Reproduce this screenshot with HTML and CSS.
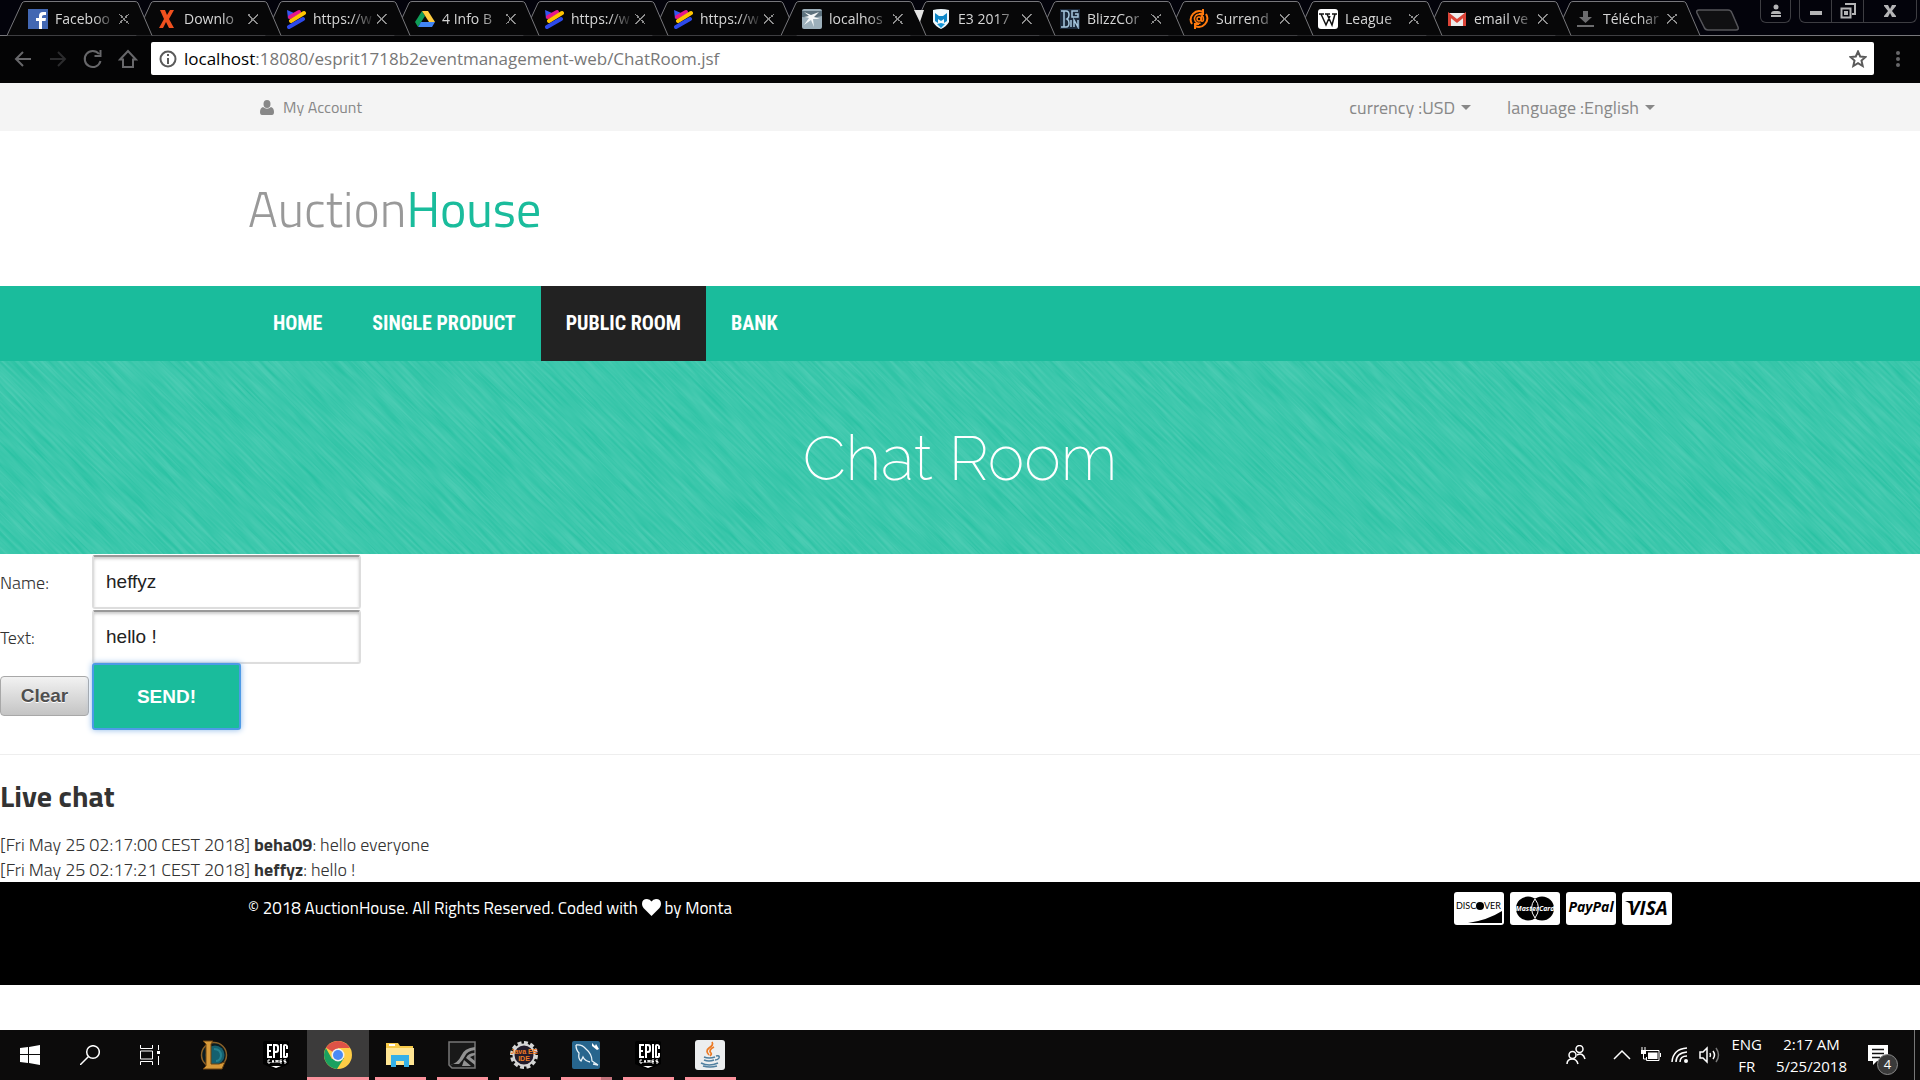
FILE: index.html
```html
<!DOCTYPE html>
<html lang="en">
<head>
<meta charset="utf-8">
<title>Chat Room</title>
<link rel="stylesheet" href="styles.css">
</head>
<body>
<svg class="defs" aria-hidden="true">
  <symbol id="shape" viewBox="0 0 146 36"><path d="M0 35.500L15 3Q16 1.500 18 1.500H128Q130 1.500 131 3L145 35.500" fill="#070708" stroke="#77777b"/></symbol>
  <symbol id="slash" viewBox="0 0 20 20"><path d="M1 1l7 3-6 6z" fill="#3558f0"/><path d="M4 8L13 3" stroke="#e6178a" stroke-width="4" stroke-linecap="round"/><path d="M5 12L18 4" stroke="#ffc400" stroke-width="4" stroke-linecap="round"/><path d="M3 18L17 10" stroke="#2c49ea" stroke-width="4" stroke-linecap="round"/></symbol>
  <symbol id="epic" viewBox="0 0 28 30"><path d="M1 3q0-2 2-2h22q2 0 2 2v21l-13 6L1 24z" fill="#000"/><path d="M5 4h5v2H7v4h2v2H7v4h3v2H5zM11 4h3q3 0 3 3v3q0 3-3 3h-1v5h-2zm2 2v5q2 0 2-1V7q0-1-2-1zM18 4h2v14h-2zM21 6q0-2 2-2t3 2v3h-2V6h-1v10h1v-3h2v3q0 2-3 2t-2-2z" fill="#fff"/><path d="M8 20H6v3h2v-1M10 23l1-3 1 3M14 23v-3l1 2 1-2v3M20 20h-2v3h2m-2-1.500h2M24 20h-2v1.500h2V23h-2" stroke="#fff" fill="none"/><path d="M9 26h10l-5 2z" fill="#fff"/></symbol>
</svg>

<header class="browser">
  <div class="strip">
    <nav class="tabs" aria-label="Tabs">
      <div class="tab"><svg class="shape"><use href="#shape"/></svg><svg class="fav" viewBox="0 0 20 20"><path d="M0 0h20v20H0z" fill="#4267b2"/><path d="M11 20v-8H8V9h3V7q0-4 4-4h3v3h-2q-2 0-2 1.500V9h4l-.5 3H14v8z" fill="#fff"/></svg><span class="name">Faceboo</span><button class="close" aria-label="Close tab"></button></div>
      <div class="tab"><svg class="shape"><use href="#shape"/></svg><svg class="fav" viewBox="0 0 20 20"><path d="M3 1h5l2 5 3-5h4l-5 9 5 9h-5l-3-6-3 6H2l5-9z" fill="#f0501e"/></svg><span class="name">Downlo</span><button class="close" aria-label="Close tab"></button></div>
      <div class="tab"><svg class="shape"><use href="#shape"/></svg><svg class="fav"><use href="#slash"/></svg><span class="name">https://w</span><button class="close" aria-label="Close tab"></button></div>
      <div class="tab"><svg class="shape"><use href="#shape"/></svg><svg class="fav" viewBox="0 0 20 20"><path d="M7 2L0 13l3 5L10 7z" fill="#0f9d58"/><path d="M7 2h6l7 11h-6z" fill="#ffcd40"/><path d="M6 13h14l-3 5H3z" fill="#4285f4"/></svg><span class="name">4 Info B</span><button class="close" aria-label="Close tab"></button></div>
      <div class="tab"><svg class="shape"><use href="#shape"/></svg><svg class="fav"><use href="#slash"/></svg><span class="name">https://w</span><button class="close" aria-label="Close tab"></button></div>
      <div class="tab"><svg class="shape"><use href="#shape"/></svg><svg class="fav"><use href="#slash"/></svg><span class="name">https://w</span><button class="close" aria-label="Close tab"></button></div>
      <div class="tab active"><svg class="shape"><use href="#shape"/></svg><svg class="fav" viewBox="0 0 20 20"><rect width="20" height="20" rx="2" fill="#9db0bb"/><path d="M0 2h20v5L10 9 0 8z" fill="#5c717d"/><path d="M2 3l7 3 8-3-5 5 6 2-7 0 1 8-3-7-7 5 5-7-5-1 5-1z" fill="#f4f7f8"/></svg><span class="name">localhos</span><button class="close" aria-label="Close tab"></button></div>
      <div class="tab"><svg class="shape"><use href="#shape"/></svg><svg class="fav" viewBox="0 0 20 20"><path d="M2 1q8-2 16 0v12q-3 5-8 7-5-2-8-7z" fill="#eef8fc"/><path d="M4 4l4 3h4l4-3v8l-3 2v-4l-3 2-3-2v4l-3-2z" fill="#0b86c8"/><path d="M6 15l4 4 4-4-4-1z" fill="#1696d8"/></svg><span class="name">E3 2017</span><button class="close" aria-label="Close tab"></button></div>
      <div class="tab"><svg class="shape"><use href="#shape"/></svg><svg class="fav" viewBox="0 0 20 20"><rect width="20" height="20" fill="#1c2a3c"/><path d="M1 2h5q3 0 3 4 0 3-2 4 2 1 2 4 0 4-3 4H1M4 2v16M18 2h-6v6h6V5h-3M11 11v7m3 0v-7l4 7v-7" fill="none" stroke="#a6c7df" stroke-width="1.500"/></svg><span class="name">BlizzCor</span><button class="close" aria-label="Close tab"></button></div>
      <div class="tab"><svg class="shape"><use href="#shape"/></svg><svg class="fav" viewBox="0 0 20 20"><path d="M3 15a8.500 8.500 0 0 1 11-12M17 5a8.500 8.500 0 0 1-11 12M14 0v5h-4M6 20v-5h4" fill="none" stroke="#ff7a0e" stroke-width="2"/><path d="M12.500 7v5q2 1 2-2a4.500 4.500 0 1 0-3 4" fill="none" stroke="#ff7a0e" stroke-width="1.500"/><circle cx="10" cy="10" r="2" fill="none" stroke="#ff7a0e" stroke-width="1.500"/></svg><span class="name">Surrend</span><button class="close" aria-label="Close tab"></button></div>
      <div class="tab"><svg class="shape"><use href="#shape"/></svg><svg class="fav" viewBox="0 0 20 20"><rect width="20" height="20" rx="3" fill="#fff"/><path d="M1 5h5M7 5h5M14 5h5M3 5l5 11 4-9M9 5l5 11 3-11" fill="none" stroke="#111" stroke-width="1.500"/></svg><span class="name">League</span><button class="close" aria-label="Close tab"></button></div>
      <div class="tab"><svg class="shape"><use href="#shape"/></svg><svg class="fav" viewBox="0 0 20 20"><rect x="1" y="4" width="18" height="13" rx="1" fill="#ececec"/><path d="M2.500 17V6l7.500 6 7.500-6v11" fill="none" stroke="#dc4437" stroke-width="3"/></svg><span class="name">email ve</span><button class="close" aria-label="Close tab"></button></div>
      <div class="tab"><svg class="shape"><use href="#shape"/></svg><svg class="fav" viewBox="0 0 20 20"><path d="M7 2h5v6h4l-6.500 6L3 8h4zM1 16h17v2H1z" fill="#6c6c6e"/></svg><span class="name">Téléchar</span><button class="close" aria-label="Close tab"></button></div>
      <svg class="marker" viewBox="0 0 10 14" aria-hidden="true"><path d="M0 1h10L6 13z" fill="#e4e4e4"/></svg>
    </nav>
    <button class="newtab" aria-label="New tab"><svg width="44" height="22" viewBox="0 0 44 22"><path d="M3 1h29q3 0 4 3l6 14q1 3-2 3H12q-3 0-4-3L1 4Q0 1 3 1z" fill="#101012" stroke="#55555a" stroke-width="1.500"/></svg></button>
    <div class="window">
      <button class="person" aria-label="Profile"><svg width="14" height="14" viewBox="0 0 14 14"><circle cx="7" cy="3" r="2.500"/><path d="M2 10q0-3 3-3h4q3 0 3 3zM2 11h10v2H2z"/></svg></button>
      <div class="controls">
        <button aria-label="Minimize"><svg width="14" height="14" viewBox="0 0 14 14"><path d="M1 7h12v4H1z"/></svg></button>
        <button aria-label="Restore"><svg width="16" height="16" viewBox="0 0 16 16"><path d="M5 1h10v10h-3M1.500 5.500h9v9h-9zM5 9h2v2H5z" fill="none" stroke="#b4b4b6" stroke-width="2"/></svg></button>
        <button class="wide" aria-label="Close"><svg width="14" height="14" viewBox="0 0 14 14"><path d="M1 1h4l2 4 2-4h4v1L9 7l4 5v1H9L7 9l-2 4H1v-1l4-5-4-5z"/></svg></button>
      </div>
    </div>
  </div>
  <div class="toolbar">
    <button aria-label="Back"><svg viewBox="0 0 20 20"><path d="M18 10H3M10 3l-7 7 7 7"/></svg></button>
    <button class="dim" aria-label="Forward"><svg viewBox="0 0 20 20"><path d="M2 10h15M10 3l7 7-7 7"/></svg></button>
    <button aria-label="Reload"><svg viewBox="0 0 20 20"><path d="M16 5a8 8 0 1 0 1.500 7M17.500 1v6h-6"/></svg></button>
    <button aria-label="Home"><svg viewBox="0 0 20 20"><path d="M2 10.500L10 2l8 8.500h-3V18H5v-7.500z"/></svg></button>
    <div class="omnibox">
      <svg width="18" height="18" viewBox="0 0 18 18"><circle cx="9" cy="9" r="7.500" fill="none" stroke="#5a5a5a" stroke-width="2"/><path d="M8 4h2v2H8zM8 8h2v6H8z" fill="#5a5a5a"/></svg>
      <div class="url" role="textbox" aria-label="Address"><b>localhost</b>:18080/esprit1718b2eventmanagement-web/ChatRoom.jsf</div>
      <svg width="18" height="18" viewBox="0 0 18 18"><path d="M9 1.500l2.200 5 5.300.5-4 3.600 1.200 5.400L9 13.200 4.300 16l1.200-5.400-4-3.600 5.300-.5z" fill="none" stroke="#5a5a5a" stroke-width="2"/></svg>
    </div>
    <button class="menu" aria-label="Menu"><svg viewBox="0 0 20 20"><circle cx="10" cy="4" r="2"/><circle cx="10" cy="10" r="2"/><circle cx="10" cy="16" r="2"/></svg></button>
  </div>
</header>

<div class="topbar">
  <div class="container">
    <a class="account" href="#"><svg width="14" height="15" viewBox="0 0 14 15"><ellipse cx="7" cy="4" rx="3.500" ry="4"/><path d="M3 7q4 3.500 8 0 3 1 3 5 0 3-2 3H2q-2 0-2-3 0-4 3-5z"/></svg>My Account</a>
    <div class="options">
      <label>currency :<select><option>USD</option></select><i class="caret"></i></label>
      <label>language :<select><option>English</option></select><i class="caret"></i></label>
    </div>
  </div>
</div>
<div class="brand"><div class="container"><h1><a href="#">Auction<span>House</span></a></h1></div></div>
<nav class="mainnav"><div class="container">
  <a href="#">HOME</a><a href="#">SINGLE PRODUCT</a><a class="current" href="#">PUBLIC ROOM</a><a href="#">BANK</a>
</div></nav>
<section class="hero">
  <svg class="texture" aria-hidden="true">
    <filter id="streaks" x="0" y="0" width="100%" height="100%" color-interpolation-filters="sRGB"><feTurbulence type="fractalNoise" baseFrequency="0.018 0.4" numOctaves="3" seed="4"/><feColorMatrix values="0 0 0 0 .1  0 0 0 0 .74  0 0 0 0 .61  1.100 0 0 0 -.25"/></filter>
    <rect x="-200" y="-1500" width="2000" height="2000" filter="url(#streaks)" transform="rotate(45)"/>
  </svg>
  <h2>Chat Room</h2>
</section>

<main>
  <form class="chat">
    <label for="name">Name:</label><input id="name" type="text" value="heffyz">
    <label for="text">Text:</label><input id="text" type="text" value="hello !">
    <button class="clear" type="reset">Clear</button><button class="send" type="button">SEND!</button>
  </form>
  <hr>
  <h3>Live chat</h3>
  <ul class="log">
    <li>[Fri May 25 02:17:00 CEST 2018] <b>beha09</b>: hello everyone</li>
    <li>[Fri May 25 02:17:21 CEST 2018] <b>heffyz</b>: hello !</li>
  </ul>
</main>
<footer class="footer"><div class="container">
  <p>© 2018 AuctionHouse. All Rights Reserved. Coded with <svg width="19" height="17" viewBox="0 0 19 17"><path d="M9.500 17L1.500 9Q0 7 0 5q0-5 5-5 3 0 4.500 2.500Q11 0 14 0q5 0 5 5 0 2-1.500 4z" fill="#fff"/></svg> by Monta</p>
  <div class="cards">
    <svg viewBox="0 0 50 33"><rect width="50" height="33" rx="3" fill="#fff"/><text x="2" y="17" font-size="9">DISC</text><circle cx="26" cy="14" r="4"/><text x="30" y="17" font-size="9">VER</text><path d="M14 31q20-3 34-12v12z"/></svg>
    <svg viewBox="0 0 50 33"><rect width="50" height="33" rx="3" fill="#fff"/><circle cx="18" cy="16.500" r="12"/><circle cx="32" cy="16.500" r="12"/><path d="M25 7q7 9 0 19-7-10 0-19z" fill="none" stroke="#fff"/><text class="master" x="25" y="19" font-size="7" text-anchor="middle">MasterCard</text></svg>
    <svg viewBox="0 0 50 33"><rect width="50" height="33" rx="3" fill="#fff"/><text class="italic" x="25" y="20" font-size="14" text-anchor="middle">PayPal</text></svg>
    <svg viewBox="0 0 50 33"><rect width="50" height="33" rx="3" fill="#fff"/><text class="italic" x="26" y="23" font-size="19" text-anchor="middle">VISA</text><path d="M3 9h6l3 7Q9 11 3 9z"/></svg>
  </div>
</div></footer>

<div class="taskbar">
  <div class="system">
    <button aria-label="Start"><svg width="20" height="20" viewBox="0 0 20 20" fill="#fff"><path d="M0 3l8-1v7H0zM9 2l11-2v9H9zM0 10h8v8l-8-1zM9 10h11v10L9 18z"/></svg></button>
    <button aria-label="Search"><svg width="20" height="20" viewBox="0 0 20 20" fill="none" stroke="#fff" stroke-width="1.500"><circle cx="13" cy="7" r="6.300"/><path d="M8.500 11.500L0 20"/></svg></button>
    <button aria-label="Task view"><svg width="20" height="20" viewBox="0 0 20 20" fill="none" stroke="#fff"><path d="M.5 0v3.500h12V0M.5 20v-3.500h12V20M.5 6h12v8H.5zM18.500 0v5M18.500 11v9"/><path d="M17 6h3v3h-3z" fill="#fff" stroke="none"/></svg></button>
  </div>
  <div class="apps">
    <button aria-label="League of Legends"><svg width="28" height="30" viewBox="0 0 28 30"><circle cx="14" cy="15" r="12.500" fill="#0b1c22" stroke="#8a6128" stroke-width="1.500"/><circle cx="15" cy="15" r="9.500" fill="#15606e"/><path d="M14 9q7 0 7 7-1 5-5 5" fill="none" stroke="#25818e" stroke-width="2"/><path d="M3 1h10l-2 3v20h8l6-2-3 7H3l3-3V4z" fill="#d79a3a" stroke="#6c4311"/></svg></button>
    <button aria-label="Epic Games"><svg width="28" height="30"><use href="#epic"/></svg></button>
    <button class="open focus" aria-label="Chrome"><svg width="28" height="28" viewBox="0 0 28 28"><circle cx="14" cy="14" r="14" fill="#ffcd46"/><path d="M14 14L2 6.800A14 14 0 0 1 26 7H14z" fill="#de5347"/><path d="M1.900 7A14 14 0 0 0 13 28l7-11-12 1z" fill="#1aa15f"/><circle cx="14" cy="14" r="6.500" fill="#f1f1f1"/><circle cx="14" cy="14" r="5" fill="#4a8af4"/></svg></button>
    <button class="open" aria-label="File Explorer"><svg width="28" height="24" viewBox="0 0 28 24"><path d="M0 0h12l2 3h13v19H0z" fill="#f7c948"/><path d="M0 5h28v17H0z" fill="#ffe593"/><path d="M5 12h18v12h-5v-6h-8v6H5z" fill="#35b0e8"/><path d="M3 1h6v2H3z" fill="#fff"/></svg></button>
    <button class="open" aria-label="GeForce Experience"><svg width="28" height="28" viewBox="0 0 28 28"><path d="M1 1h26v26H4l-3-3z" fill="#191919" stroke="#777" stroke-width="1.500"/><path d="M2 24q8-2 11-9 3-8 14-9v3q-8 1-10 6-2 4-6 8H4zM27 12q-7 0-9 5l9 7v-4l-5-4 5-2zM16 19l7 6h-9z" fill="#929292"/></svg></button>
    <button class="open" aria-label="Eclipse Java EE"><svg width="28" height="28" viewBox="0 0 28 28"><circle cx="14" cy="14" r="12.500" fill="none" stroke="#d5d5d5" stroke-width="3" stroke-dasharray="4 2.500"/><circle cx="14" cy="14" r="10.500" fill="#231c2b" stroke="#d5d5d5" stroke-width="2"/><text class="ide" x="14" y="13" text-anchor="middle">Java EE</text><text class="ide" x="14" y="20" text-anchor="middle">IDE</text></svg></button>
    <button class="open multi" aria-label="MySQL Workbench"><svg width="28" height="28" viewBox="0 0 28 28"><rect width="28" height="28" rx="2" fill="#27658d"/><path d="M4 4q6-1 10 4 6 5 6 12l6 4-5-1M4 4q0 5 3 8-1 6 2 8l2-4q2 4 7 5" fill="none" stroke="#e8f2f8" stroke-width="1.300"/><path d="M20 2l3 3 1-2 3 5-2 1-5-4z" fill="#fff"/></svg></button>
    <button class="open" aria-label="Epic Games Launcher"><svg width="28" height="30"><use href="#epic"/></svg></button>
    <button class="open" aria-label="Java"><svg width="30" height="30" viewBox="0 0 30 30"><rect width="30" height="30" rx="3" fill="#eceeef"/><path d="M17 2q2 3-3 6-4 3 0 7M19 7q-6 3-3 6 1 1-1 3" fill="none" stroke="#ec7a24" stroke-width="1.700"/><path d="M9 17q5 2 11 0M9 20q5 2 10 0M6 23q8 4 17 0M8 26q7 2 14 0M21 16q4-1 3 2-1 2-4 2" fill="none" stroke="#4f7f9f" stroke-width="1.600"/></svg></button>
  </div>
  <div class="tray">
    <svg width="20" height="20" viewBox="0 0 20 20"><circle cx="13.500" cy="4" r="3.500"/><circle cx="6.500" cy="10" r="3.500"/><path d="M1 19q0-5 5.500-5 4 0 5.500 5M11 10q6-3 8 4"/></svg>
    <svg class="chev" width="18" height="20" viewBox="0 0 18 20"><path d="M1 14l8-8 8 8"/></svg>
    <svg width="20" height="20" viewBox="0 0 20 20"><path d="M4 5.500h14v10H5.500V12M19.500 8v4" stroke-width="1"/><path d="M7 7.500h9.500V14H7zM0 5h5v4H0z" fill="#fff" stroke="none"/><path d="M1 2v4M4 2v4M2.500 8v6h3" stroke-width="1"/></svg>
    <svg width="18" height="20" viewBox="0 0 18 20"><path d="M1 17Q2 4 16 3M5 17Q5 8 16 7M9 17q0-6 7-6"/><circle cx="15" cy="16" r="2" fill="#fff" stroke="none"/></svg>
    <svg width="22" height="20" viewBox="0 0 22 20"><path d="M1 7h3l4-4v14l-4-4H1zM11 8q1 2 0 4M14 6q3 4 0 8"/><path d="M17 3q5 7 0 14" stroke="#777"/></svg>
    <div class="lang"><span>ENG</span><span>FR</span></div>
    <div class="clock"><span>2:17 AM</span><span>5/25/2018</span></div>
    <button class="notes" aria-label="Notifications"><svg width="20" height="20" viewBox="0 0 20 20"><path d="M0 0h20v16H9l-4 4v-4H0z" fill="#fff" stroke="none"/><path d="M4 4.500h12M4 8.500h12M4 12.500h8" stroke="#111"/></svg><span class="badge">4</span></button>
  </div>
</div>
</body>
</html>
```
FILE: styles.css
```css
* { box-sizing: border-box; }
body {
  margin: 0;
  min-height: 100vh;
  display: flex;
  flex-direction: column;
  background: #fff;
  color: #333;
  font: 300 18px/25px "Titillium Web", Roboto, sans-serif;
}
a { color: inherit; text-decoration: none; }
button { border: 0; padding: 0; background: none; font: inherit; color: inherit; }
.defs { display: none; }

/* browser frame */
.browser { background: #040405; font: 400 14px/20px "Open Sans", sans-serif; }
.strip {
  display: flex;
  justify-content: space-between;
  height: 36px;
  padding-left: 7px;
  background: #03030b;
  border-bottom: 1px solid #77777b;
}
.tabs { display: flex; flex: 0 1 1677px; min-width: 0; position: relative; }
.tab {
  position: relative;
  flex: 1 1 0;
  min-width: 0;
  height: 36px;
  display: flex;
  align-items: center;
  padding: 2px 6px 0 21px;
  color: #d6d6d6;
}
.tab:nth-child(1) { z-index: 13; }
.tab:nth-child(2) { z-index: 12; }
.tab:nth-child(3) { z-index: 11; }
.tab:nth-child(4) { z-index: 10; }
.tab:nth-child(5) { z-index: 9; }
.tab:nth-child(6) { z-index: 8; }
.tab:nth-child(8) { z-index: 6; }
.tab:nth-child(9) { z-index: 5; }
.tab:nth-child(10) { z-index: 4; }
.tab:nth-child(11) { z-index: 3; }
.tab:nth-child(12) { z-index: 2; }
.tab.active { z-index: 20; }
.shape { position: absolute; left: 0; top: 0; width: 146px; height: 36px; }
.fav { position: relative; flex: none; width: 20px; height: 20px; }
.name {
  position: relative;
  flex: 1;
  min-width: 0;
  margin-left: 7px;
  white-space: nowrap;
  -webkit-mask-image: linear-gradient(to right, #000 65%, rgba(0, 0, 0, .15));
  mask-image: linear-gradient(to right, #000 65%, rgba(0, 0, 0, .15));
}
.close {
  position: relative;
  flex: none;
  width: 10px;
  height: 10px;
  margin: 0 1px 0 5px;
  background:
    linear-gradient(45deg, transparent 45%, #8c8c8c 45% 55%, transparent 55%),
    linear-gradient(-45deg, transparent 45%, #8c8c8c 45% 55%, transparent 55%);
}
.marker { position: absolute; z-index: 30; left: 907px; top: 9px; width: 10px; height: 14px; }
.newtab { height: 22px; margin: 9px auto 0 12px; }
.window { display: flex; gap: 8px; padding-right: 3px; fill: #b4b4b6; }
.window button { height: 22px; display: grid; place-items: center; }
.window .person, .controls { height: 23px; border: 1px solid #3d3d42; border-top: 0; border-radius: 0 0 6px 6px; }
.window .person { width: 31px; }
.controls { display: flex; }
.controls button { width: 32px; border-right: 1px solid #3d3d42; }
.controls .wide { width: 52px; border: 0; }
.toolbar { display: flex; align-items: center; height: 47px; padding: 0 12px 2px 13px; }
.toolbar button { flex: none; width: 20px; height: 20px; margin-right: 15px; }
.toolbar button svg { display: block; width: 20px; height: 20px; fill: none; stroke: #67676a; stroke-width: 2; }
.toolbar .dim svg { stroke: #2b2b2d; }
.toolbar .menu { margin: 0; }
.toolbar .menu svg { fill: #67676a; stroke: none; }
.omnibox {
  flex: 1;
  display: flex;
  align-items: center;
  gap: 7px;
  height: 33px;
  margin: 0 14px 0 -2px;
  padding: 0 7px 0 8px;
  background: #fff;
  border-radius: 2px;
}
.url { flex: 1; font-size: 17px; line-height: 24px; color: #777; white-space: nowrap; overflow: hidden; }
.url b { font-weight: 400; color: #000; }

/* site header */
.container { width: 100%; max-width: 1462px; margin: 0 auto; padding: 0 19px; }
.topbar { background: #f4f4f4; color: #888; font-weight: 400; }
.topbar .container { display: flex; justify-content: space-between; align-items: center; height: 48px; }
.account { display: flex; align-items: center; gap: 9px; padding-left: 12px; font-size: 16px; }
.account svg { fill: #888; }
.options { display: flex; gap: 36px; padding-right: 17px; }
.options label { display: flex; align-items: center; }
.options select {
  appearance: none;
  field-sizing: content;
  border: 0;
  padding: 0;
  background: none;
  color: inherit;
  font: inherit;
}
.caret { margin-left: 6px; border: 5px solid transparent; border-top-color: #888; border-bottom: 0; }
.brand .container { height: 155px; padding-top: 42px; }
.brand h1 { margin: 0; font-size: 50px; line-height: 70px; font-weight: 300; color: #999; }
.brand span { color: #1abc9c; font-weight: 400; }
.mainnav { background: #1abc9c; }
.mainnav .container { display: flex; }
.mainnav a {
  padding: 0 25px;
  color: #fff;
  font: 700 20px/75px "Roboto Condensed", "Liberation Sans Narrow", Roboto, sans-serif;
}
.mainnav .current { background: #222; }
.hero { position: relative; overflow: hidden; padding: 58px 0 55px; background: #4bccb3; text-align: center; }
.texture { position: absolute; left: 0; top: 0; width: 100%; height: 100%; }
.hero h2 {
  position: relative;
  margin: 0;
  color: #fff;
  font: 200 62px/80px Raleway, Lato, sans-serif;
}

/* chat form */
.chat {
  display: grid;
  grid-template-columns: 91px 269px;
  column-gap: 1px;
  align-items: center;
  justify-items: start;
  padding-top: 1px;
}
.chat input {
  width: 269px;
  height: 54px;
  margin-bottom: 1px;
  padding: 0 12px;
  border: 2px solid #ddd;
  border-top-color: #999;
  border-radius: 3px;
  box-shadow: inset 0 2px 3px #ccc;
  background: #fff;
  color: #222;
  font: 400 19px/24px "Liberation Sans", sans-serif;
}
.clear {
  width: 89px;
  height: 40px;
  margin-bottom: 4px;
  border: 1px solid #a8a8a8;
  border-radius: 4px;
  background: linear-gradient(#f2f2f2, #c4c4c4);
  color: #4f4f4f;
  text-shadow: 0 1px 0 #fff;
  font: 700 19px/24px "Liberation Sans", sans-serif;
}
.chat .send {
  width: 149px;
  height: 67px;
  margin-top: -2px;
  border: 2px solid #4d9ae6;
  border-radius: 3px;
  background: #1abc9c;
  box-shadow: 0 0 6px #8cb8e8;
  color: #fff;
  font: 700 19px/24px "Liberation Sans", sans-serif;
}
hr { margin: 24px 0 21px; border: 0; border-top: 1px solid #eee; }
h3 { margin: 0 0 16px; font-size: 30px; line-height: 40px; font-weight: 700; }
.log { list-style: none; margin: 0; padding: 0; }
.log b { font-weight: 700; }

/* footer */
.footer { height: 103px; background: #000; color: #fff; font-weight: 400; }
.footer .container { display: flex; justify-content: space-between; align-items: flex-start; padding-top: 10px; }
.footer p { margin: 4px 0 0; font-size: 17px; }
.footer p svg { vertical-align: -2px; }
.cards { display: flex; gap: 6px; }
.cards svg { width: 50px; height: 33px; font-family: Lato, sans-serif; font-weight: 400; }
.cards .italic { font-family: "Open Sans", sans-serif; font-style: italic; font-weight: 700; }
.cards .master { font-family: "Open Sans", sans-serif; font-weight: 700; font-style: italic; fill: #fff; }

/* desktop taskbar */
.taskbar {
  display: flex;
  height: 50px;
  margin-top: auto;
  background: #0c0b0b;
  color: #fff;
  font: 400 15px/22px "Open Sans", sans-serif;
}
.system { display: flex; margin-right: 3px; }
.system button { width: 60px; height: 50px; display: grid; place-items: center; }
.apps { display: flex; }
.apps button { width: 62px; height: 50px; display: grid; place-items: center; }
.apps .open {
  background: linear-gradient(#fb929d, #fb929d) center bottom / 51px 3px no-repeat;
}
.apps .multi {
  background-image: linear-gradient(to right, #fb929d 40px, #c4737c 40px);
}
.apps .focus { background-color: #3c3b3b; background-size: 62px 3px; }
.ide { fill: #ee7b24; font: 700 7px/8px "Liberation Sans", sans-serif; }
.tray { display: flex; align-items: center; margin-left: auto; gap: 10px; padding-right: 5px; }
.tray svg { fill: none; stroke: #fff; stroke-width: 1.500; }
.tray .chev { margin-left: 17px; }
.lang, .clock { display: flex; flex-direction: column; align-items: center; }
.clock { margin-left: 4px; }
.notes { position: relative; height: 50px; padding: 4px 26px 0 11px; border-right: 1px solid #777; }
.badge {
  position: absolute;
  left: 20px;
  top: 24px;
  width: 21px;
  height: 21px;
  border: 1px solid #8a8a8a;
  border-radius: 50%;
  background: #3a3a3a;
  font-size: 13px;
  line-height: 19px;
  text-align: center;
}
```
